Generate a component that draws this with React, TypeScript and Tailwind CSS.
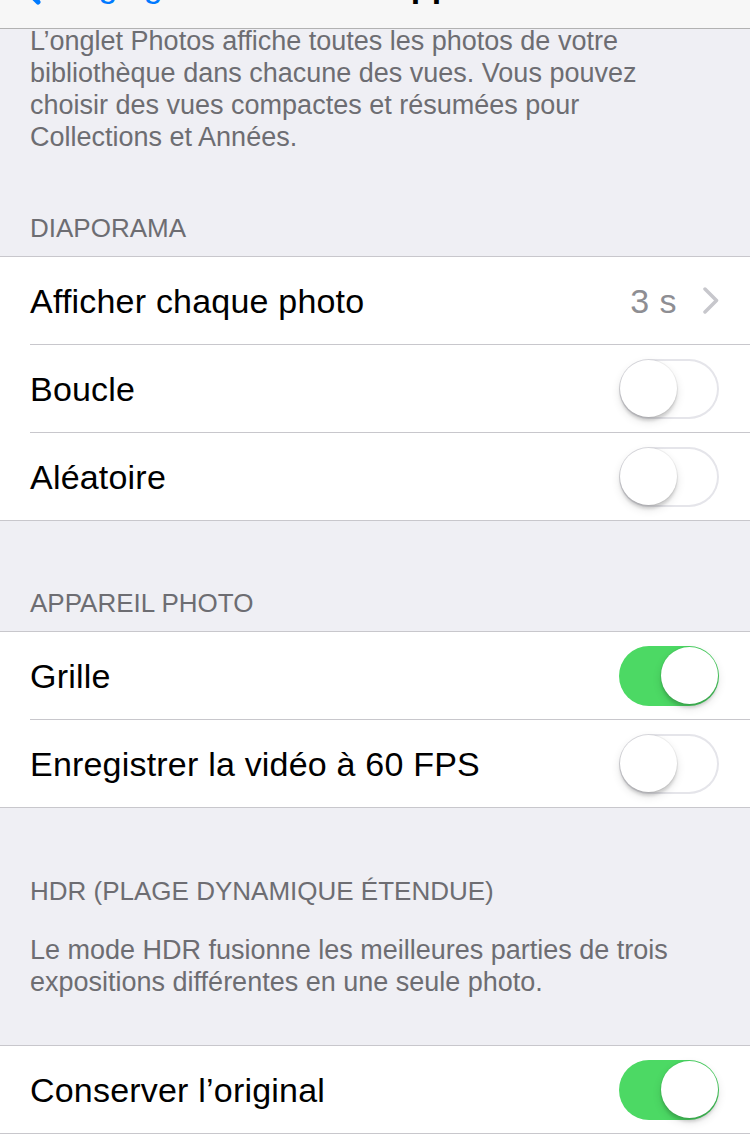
import React from 'react';

type Row = {
  label: string;
  detail?: string;
  toggle?: boolean;
  on?: boolean;
};

const font = { fontFamily: '"Liberation Sans", Arial, sans-serif' };

function Toggle({ on }: { on: boolean }) {
  return (
    <div
      className={`flex h-[60px] w-[100px] items-center rounded-full p-px ${
        on
          ? 'justify-end bg-[#4cd964]'
          : 'justify-start bg-white shadow-[inset_0_0_0_2px_#e5e5ea]'
      }`}
    >
      <div className="h-[57px] w-[57px] rounded-full bg-white shadow-[0_0_0_1px_rgba(0,0,0,0.05),0_4px_3px_rgba(0,0,0,0.12),0_4px_10px_rgba(0,0,0,0.12)]" />
    </div>
  );
}

function Chevron() {
  return (
    <svg width="16" height="27" viewBox="0 0 16 27" className="ml-[26px]">
      <polyline
        points="2,2 13.5,13.5 2,25"
        fill="none"
        stroke="#c7c7cc"
        strokeWidth="3.5"
        strokeLinecap="round"
        strokeLinejoin="round"
      />
    </svg>
  );
}

// rows are border-box: 87px content + 1px separator, last row 87px without separator
function Group({ rows }: { rows: Row[] }) {
  return (
    <div className="border-y border-[#c8c7cc] bg-white">
      {rows.map((row, i) => (
        <div
          key={row.label}
          className={`ml-[30px] flex items-center pr-[31px] ${
            i < rows.length - 1 ? 'h-[88px] border-b border-[#c8c7cc]' : 'h-[87px]'
          }`}
        >
          <span className="flex-1 text-[34px] leading-none tracking-[0.2px] text-black">{row.label}</span>
          {row.detail && (
            <span className="flex items-center">
              <span className="text-[34px] leading-none tracking-[0.5px] text-[#8e8e93]">{row.detail}</span>
              <Chevron />
            </span>
          )}
          {row.toggle && <Toggle on={!!row.on} />}
        </div>
      ))}
    </div>
  );
}

function Header({ children, className = '' }: { children: React.ReactNode; className?: string }) {
  return (
    <div className={`px-[30px] pb-[12px] text-[26px] leading-[32px] text-[#6d6d72] ${className}`}>{children}</div>
  );
}

export default function App() {
  return (
    <div className="relative h-[1134px] w-[750px] overflow-hidden bg-[#efeff4]" style={font}>
      {/* nav bar, mostly scrolled off the top */}
      <div className="absolute left-0 right-0 top-0 z-10 h-[29px] overflow-hidden border-b border-[#b2b2b2] bg-[#f7f7f7]">
        <div className="relative -mt-[32px] flex h-[34px] items-center">
          <svg width="26" height="44" viewBox="0 0 26 44" className="ml-[16px] mt-[-2px]">
            <polyline
              points="22,2 4,22 22,40"
              fill="none"
              stroke="#007aff"
              strokeWidth="5"
              strokeLinecap="round"
              strokeLinejoin="round"
            />
          </svg>
          <span className="ml-[13px] text-[34px] leading-[34px] text-[#007aff]">Réglages</span>
          <span className="absolute left-0 right-0 top-0 text-center text-[34px] font-bold leading-[34px] text-black">
            Photos et appareil
          </span>
        </div>
      </div>

      <div className="pt-[25px]">
        <div className="px-[30px] text-[27px] leading-[32px] text-[#6d6d72]">
          L’onglet Photos affiche toutes les photos de votre
          <br />
          bibliothèque dans chacune des vues. Vous pouvez
          <br />
          choisir des vues compactes et résumées pour
          <br />
          Collections et Années.
        </div>

        <Header className="mt-[59px]">DIAPORAMA</Header>
        <Group
          rows={[
            { label: 'Afficher chaque photo', detail: '3 s' },
            { label: 'Boucle', toggle: true },
            { label: 'Aléatoire', toggle: true },
          ]}
        />

        <Header className="mt-[66px]">APPAREIL PHOTO</Header>
        <Group
          rows={[
            { label: 'Grille', toggle: true, on: true },
            { label: 'Enregistrer la vidéo à 60 FPS', toggle: true },
          ]}
        />

        <div className="mt-[67px] px-[30px] text-[26px] leading-[32px] text-[#6d6d72]">
          HDR (PLAGE DYNAMIQUE ÉTENDUE)
        </div>
        <div className="mt-[27px] px-[30px] text-[27px] leading-[32px] text-[#6d6d72]">
          Le mode HDR fusionne les meilleures parties de trois
          <br />
          expositions différentes en une seule photo.
        </div>

        <div className="mt-[47px]">
          <Group rows={[{ label: 'Conserver l’original', toggle: true, on: true }]} />
        </div>
      </div>
    </div>
  );
}
